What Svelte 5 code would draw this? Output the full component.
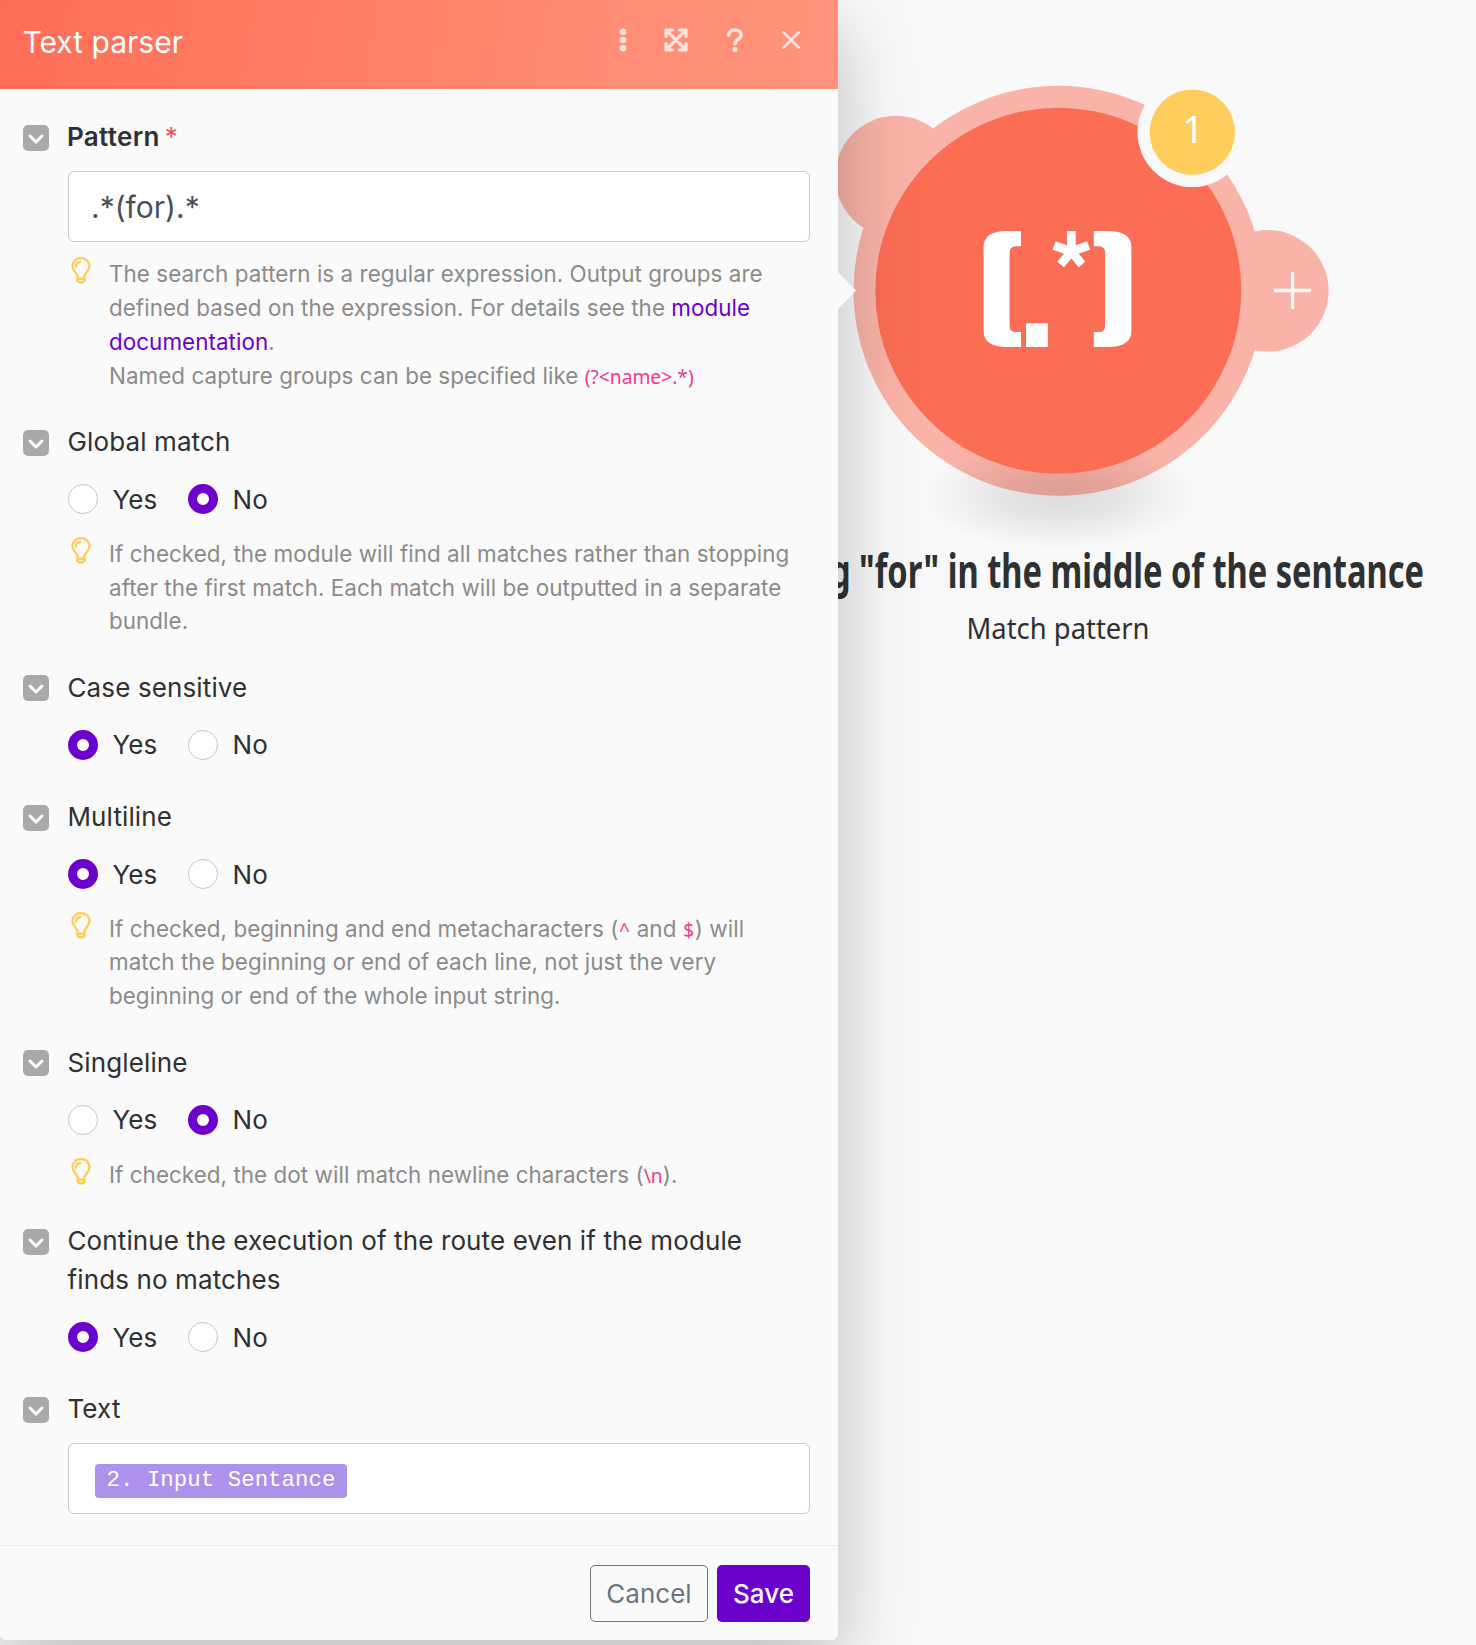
<script>
  const fields = $state([
    { label: 'Pattern', required: true, kind: 'input', value: '.*(for).*', hint: 'pattern' },
    { label: 'Global match', kind: 'choice', value: 'No', hint: 'global' },
    { label: 'Case sensitive', kind: 'choice', value: 'Yes' },
    { label: 'Multiline', kind: 'choice', value: 'Yes', hint: 'multiline' },
    { label: 'Singleline', kind: 'choice', value: 'No', hint: 'singleline' },
    {
      label: 'Continue the execution of the route even if the module finds no matches',
      kind: 'choice',
      value: 'Yes'
    },
    { label: 'Text', kind: 'token', value: '2. Input Sentance' }
  ]);
</script>

<div class="page">
  <aside class="panel">
    <header>
      <h1>Text parser</h1>
      <div class="tools">
        <svg class="tool" viewBox="0 0 24 24">
          <g fill="currentColor"><circle cx="12" cy="3.8" r="3.3" /><circle cx="12" cy="12" r="3.3" /><circle cx="12" cy="20.2" r="3.3" /></g>
        </svg>
        <svg class="tool expand" viewBox="0 0 24 24">
          <path d="M2 8.5V2h6.500M15.500 2H22v6.500M22 15.500V22h-6.500M8.500 22H2v-6.500M2.500 2.500l19 19M21.500 2.500l-19 19" />
        </svg>
        <svg class="tool help" viewBox="0 0 24 24">
          <path d="M5.800 7C6 3.600 8.500 2 12 2s6.200 1.900 6.200 5c0 4.500-6.200 4.200-6.200 8.800" />
          <circle cx="12" cy="21.400" r="2.500" fill="currentColor" stroke="none" />
        </svg>
        <svg class="tool close" viewBox="0 0 24 24">
          <path d="M4.500 4.500l15 15M19.500 4.500l-15 15" />
        </svg>
      </div>
    </header>

    <div class="fields">
      {#each fields as field}
        <section class="field {field.hint ?? ''}" class:hinted={field.hint}>
          <div class="toggle">
            <svg viewBox="0 0 26 26"><path d="M7 11l6 6 6-6" /></svg>
          </div>
          <div class="content">
            <div class="label" class:bold={field.required}>
              {field.label}{#if field.required}<span class="star">*</span>{/if}
            </div>

            {#if field.kind === 'input'}
              <div class="input">{field.value}</div>
            {:else if field.kind === 'token'}
              <div class="input"><span class="token">{field.value}</span></div>
            {:else}
              <div class="choices">
                {#each ['Yes', 'No'] as option}
                  <div class="choice">
                    <span class="radio" class:on={field.value === option}></span>
                    <span class="option">{option}</span>
                  </div>
                {/each}
              </div>
            {/if}

            {#if field.hint}
              <div class="hint">
                <svg class="bulb" viewBox="0 0 20 27">
                  <path d="M6.800 20C6.200 15.500 1.500 14 1.500 9.300a8.500 8.300 0 0 1 17 0c0 4.700-4.700 6.200-5.300 10.700" />
                  <path d="M5 9.500C5 7 6.800 5.200 9.200 5" />
                  <path d="M6.300 21.800h7.400v1.400l-1.600 2H7.900l-1.600-2z" />
                </svg>
                <p>
                  {#if field.hint === 'pattern'}
                    The search pattern is a regular expression. Output groups are<br />
                    defined based on the expression. For details see the <span class="link">module</span><br />
                    <span class="link">documentation</span>.<br />
                    Named capture groups can be specified like <code>{'(?<name>.*)'}</code>
                  {:else if field.hint === 'global'}
                    If checked, the module will find all matches rather than stopping<br />
                    after the first match. Each match will be outputted in a separate<br />
                    bundle.
                  {:else if field.hint === 'multiline'}
                    If checked, beginning and end metacharacters (<code class="sign">^</code> and <code class="sign">$</code>) will<br />
                    match the beginning or end of each line, not just the very<br />
                    beginning or end of the whole input string.
                  {:else}
                    If checked, the dot will match newline characters (<code>\n</code>).
                  {/if}
                </p>
              </div>
            {/if}
          </div>
        </section>
      {/each}
    </div>

    <footer>
      <button class="cancel">Cancel</button>
      <button class="save">Save</button>
    </footer>
    <svg class="pointer" viewBox="0 0 18 37"><path d="M0 0l18 18.500L0 37z" /></svg>
  </aside>

  <main>
    <svg class="canvas" viewBox="838 0 638 1645">
      <defs>
        <radialGradient id="ground">
          <stop offset="0" stop-color="#000" stop-opacity=".12" />
          <stop offset=".4" stop-color="#000" stop-opacity=".085" />
          <stop offset=".75" stop-color="#000" stop-opacity=".035" />
          <stop offset="1" stop-color="#000" stop-opacity="0" />
        </radialGradient>
      </defs>
      <g fill="#fab3a8">
        <circle cx="896" cy="176.500" r="60.700" />
        <circle cx="1267.800" cy="290.800" r="60.800" />
        <circle cx="1058.500" cy="290.800" r="205" />
      </g>
      <ellipse cx="1060" cy="495" rx="140" ry="54" fill="url(#ground)" />
      <circle cx="1058.300" cy="290.800" r="183" fill="#fb6d55" />
      <path d="M1292.500 273.300v34.400M1275.300 290.500h34.400" stroke="#fff" stroke-width="3.300" stroke-linecap="round" />
      <g fill="#fff">
        <path d="M1021 231v15.300h-5q-6.400 0-6.400 6.500v73q0 6.300 6.400 6.300h5V347h-14q-23.400 0-23.400-16v-84q0-16 23.400-16z" />
        <path d="M1093.800 231v15.300h5q6.300 0 6.300 6.500v73q0 6.300-6.300 6.300h-5V347h14q23.600 0 23.600-16v-84q0-16-23.600-16z" />
        <path d="M1026 323.300h21.800V347H1026z" />
      </g>
      <path d="M1071.300 251.500V231M1071.300 251.500l-17.300-6M1071.300 251.500l17.300-6M1071.300 251.500l-10.700 13M1071.300 251.500l10.700 13" stroke="#fff" stroke-width="8.800" />
      <circle cx="1192.300" cy="132.300" r="54.800" fill="#f9f9f9" />
      <circle cx="1192.300" cy="132.300" r="42.700" fill="#ffcd5c" />
      <text class="badge" x="1193" y="143">1</text>
      <text class="title" x="830" y="588" textLength="594" lengthAdjust="spacingAndGlyphs">g "for" in the middle of the sentance</text>
      <text class="subtitle" x="966.500" y="639" textLength="183" lengthAdjust="spacingAndGlyphs">Match pattern</text>
    </svg>
  </main>
</div>

<style>
  :global(body) {
    background: #f9f9f9;
  }
  .page {
    display: flex;
    height: 1645px;
    overflow: hidden;
    font-family: Inter, sans-serif;
    color: #2f3031;
  }
  .panel {
    position: relative;
    z-index: 1;
    display: flex;
    flex-direction: column;
    width: 838px;
    height: 1640px;
    flex: none;
    background: #fafafa;
    border-radius: 0 0 6px 6px;
    box-shadow: 0 26px 80px rgba(0, 0, 0, 0.25);
  }
  .pointer {
    position: absolute;
    left: 838px;
    top: 271.500px;
    width: 18px;
    height: 37px;
    fill: #fafafa;
  }
  header {
    display: flex;
    align-items: center;
    justify-content: space-between;
    box-sizing: border-box;
    height: 89px;
    flex: none;
    padding: 0 35.500px 9px 22.500px;
    background: linear-gradient(100deg, #ff6d55, #ff8d75 75%, #ff937b);
    color: #fff;
  }
  h1 {
    margin: 4px 0 0;
    font-size: 30px;
    font-weight: 400;
  }
  .tools {
    display: flex;
    color: #ffe3dc;
  }
  .tool {
    width: 24px;
    height: 24px;
    fill: none;
    stroke-linecap: round;
  }
  .expand,
  .help,
  .close {
    stroke: currentColor;
    stroke-width: 3.200;
  }
  .expand {
    margin-left: 29.500px;
    stroke-linejoin: round;
  }
  .help {
    margin-left: 35px;
    stroke-width: 3.600;
  }
  .close {
    margin-left: 31.500px;
    stroke-width: 2.800;
  }
  .fields {
    flex: 1;
    min-height: 0;
    padding: 28px 28px 0 23px;
  }
  .field {
    display: flex;
    gap: 19px;
    margin-bottom: 37.200px;
  }
  .field.hinted {
    margin-bottom: 30.100px;
  }
  .field.pattern {
    margin-bottom: 29.200px;
  }
  .toggle {
    width: 26px;
    height: 26px;
    flex: none;
    margin-top: 7.500px;
    border-radius: 5px;
    background: #a9a9a9;
  }
  .toggle svg {
    display: block;
    fill: none;
    stroke: #fff;
    stroke-width: 3;
    stroke-linecap: round;
    stroke-linejoin: round;
  }
  .content {
    flex: 1;
  }
  .label {
    margin-left: -0.500px;
    padding-right: 40px;
    font-size: 26px;
    letter-spacing: 0.120px;
    line-height: 39px;
  }
  .bold {
    margin-left: -1px;
    font-weight: 600;
    letter-spacing: 0.300px;
  }
  .star {
    margin-left: 5px;
    color: #f0506a;
    font-weight: 400;
  }
  .input {
    display: flex;
    align-items: center;
    box-sizing: border-box;
    height: 71px;
    margin-top: 15px;
    padding: 0 22px;
    border: 1px solid #c8c8c8;
    border-radius: 6px;
    background: #fff;
    color: #495057;
    font-size: 30px;
  }
  .token {
    box-sizing: border-box;
    margin: 4px 0 0 4px;
    height: 34px;
    padding: 0 11.500px;
    border-radius: 4px;
    background: #ac92eb;
    color: #fff;
    font: 22.400px/33px 'Courier New', 'Liberation Mono', monospace;
    letter-spacing: 0.030px;
  }
  .choices {
    display: flex;
    margin-top: 23px;
  }
  .choice {
    display: flex;
    align-items: center;
    width: 120px;
    height: 30px;
  }
  .radio {
    box-sizing: border-box;
    width: 30px;
    height: 30px;
    margin-right: 14.500px;
    border: 1px solid #c8c8c8;
    border-radius: 50%;
    background: #fff;
  }
  .radio.on {
    border: 9.500px solid #6c00cc;
  }
  .option {
    font-size: 26px;
    letter-spacing: 0.100px;
  }
  .hint {
    display: flex;
    margin-top: 22.800px;
    color: #8b8b8b;
  }
  .input + .hint {
    margin-top: 15px;
  }
  .bulb {
    width: 20px;
    height: 27px;
    margin: 0 18.500px 0 2.500px;
    fill: none;
    stroke: #ffcd5c;
    stroke-width: 2.400;
    stroke-linecap: round;
    stroke-linejoin: round;
  }
  p {
    margin: 0;
    font-size: 22.400px;
    letter-spacing: 0.055px;
    line-height: 33.600px;
    white-space: nowrap;
  }
  .pattern p {
    line-height: 34px;
  }
  .link {
    color: #6c00cc;
  }
  code {
    color: #f0388c;
    font: 19.200px/1 'Noto Sans', sans-serif;
    letter-spacing: 0;
  }
  .sign {
    padding: 0 0.500px;
  }
  footer {
    display: flex;
    justify-content: flex-end;
    gap: 9px;
    box-sizing: border-box;
    height: 95px;
    flex: none;
    padding: 19px 28px 0;
    border-top: 1px solid #ececec;
  }
  button {
    box-sizing: border-box;
    height: 57px;
    padding: 0;
    border-radius: 5px;
    font: 26px Inter, sans-serif;
  }
  .cancel {
    width: 118px;
    border: 1px solid #6c757d;
    background: none;
    color: #6c757d;
  }
  .save {
    width: 93px;
    border: none;
    background: #6c00cc;
    color: #fff;
    font-weight: 500;
  }
  .canvas {
    display: block;
    width: 638px;
    height: 1645px;
    overflow: visible;
  }
  text {
    font-family: 'Noto Sans', sans-serif;
    fill: #2f3031;
  }
  .badge {
    font-size: 38px;
    text-anchor: middle;
    fill: #fff;
  }
  .title {
    font-size: 46px;
    font-weight: 700;
  }
  .subtitle {
    font-size: 29px;
  }
</style>
